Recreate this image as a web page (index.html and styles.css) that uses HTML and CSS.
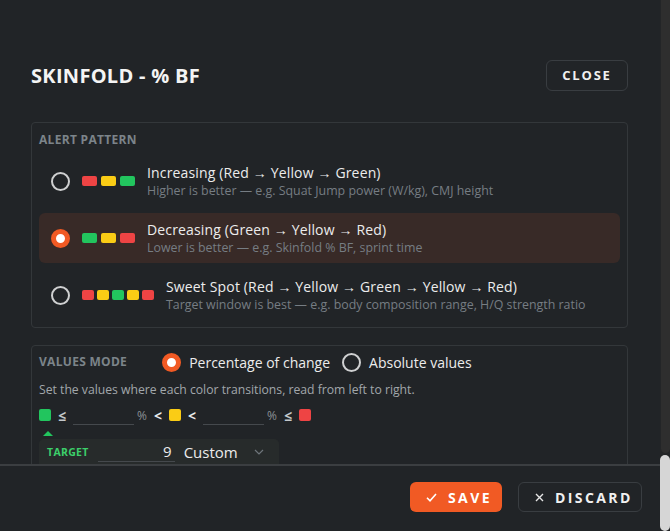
FILE: index.html
```html
<!DOCTYPE html>
<html lang="en">
<head>
    <meta charset="UTF-8">
    <meta name="viewport" content="width=device-width, initial-scale=1.0">
    <title>Skinfold - % BF</title>
    <link rel="stylesheet" href="styles.css">
</head>
<body>

    <div class="screen">
        <div class="modal">
            <div class="modal-body">

                <div class="modal-head">
                    <h1>SKINFOLD - % BF</h1>
                    <button class="btn-outline btn-close">CLOSE</button>
                </div>

                <section class="panel alert-panel">
                    <h2 class="panel-label">ALERT PATTERN</h2>

                    <div class="pattern">
                        <span class="radio"></span>
                        <span class="swatches">
                            <i class="sw red"></i><i class="sw yellow"></i><i class="sw green"></i>
                        </span>
                        <div class="pattern-text">
                            <div class="pattern-title">Increasing (Red → Yellow → Green)</div>
                            <div class="pattern-sub">Higher is better — e.g. Squat Jump power (W/kg), CMJ height</div>
                        </div>
                    </div>

                    <div class="pattern active">
                        <span class="radio checked"></span>
                        <span class="swatches">
                            <i class="sw green"></i><i class="sw yellow"></i><i class="sw red"></i>
                        </span>
                        <div class="pattern-text">
                            <div class="pattern-title">Decreasing (Green → Yellow → Red)</div>
                            <div class="pattern-sub">Lower is better — e.g. Skinfold % BF, sprint time</div>
                        </div>
                    </div>

                    <div class="pattern">
                        <span class="radio"></span>
                        <span class="swatches small">
                            <i class="sw red"></i><i class="sw yellow"></i><i class="sw green"></i><i class="sw yellow"></i><i class="sw red"></i>
                        </span>
                        <div class="pattern-text">
                            <div class="pattern-title">Sweet Spot (Red → Yellow → Green → Yellow → Red)</div>
                            <div class="pattern-sub">Target window is best — e.g. body composition range, H/Q strength ratio</div>
                        </div>
                    </div>
                </section>

                <section class="panel values-panel">
                    <div class="mode-row">
                        <h2 class="panel-label">VALUES MODE</h2>
                        <div class="mode-options">
                            <label class="mode-option"><span class="radio checked"></span>Percentage of change</label>
                            <label class="mode-option"><span class="radio"></span>Absolute values</label>
                        </div>
                    </div>

                    <p class="hint">Set the values where each color transitions, read from left to right.</p>

                    <div class="thresholds">
                        <i class="sq green"></i>
                        <span class="op">≤</span>
                        <input class="th-input" type="text">
                        <span class="unit">%</span>
                        <span class="op strong">&lt;</span>
                        <i class="sq yellow"></i>
                        <span class="op strong">&lt;</span>
                        <input class="th-input" type="text">
                        <span class="unit">%</span>
                        <span class="op">≤</span>
                        <i class="sq red"></i>
                    </div>

                    <div class="pointer"></div>

                    <div class="target">
                        <span class="target-label">TARGET</span>
                        <input class="target-input" type="text" value="9">
                        <span class="target-select">Custom
                            <svg class="chevron" width="10" height="6" viewBox="0 0 10 6">
                                <path d="M1 1l4 4 4-4" fill="none" stroke="#6e757b" stroke-width="1.2"/>
                            </svg>
                        </span>
                    </div>
                </section>

            </div>

            <div class="modal-foot">
                <button class="btn-save">
                    <svg width="11" height="9" viewBox="0 0 11 9">
                        <path d="M1 4.8l3 3L10 1" fill="none" stroke="#fff" stroke-width="1.6"/>
                    </svg>
                    SAVE
                </button>
                <button class="btn-outline btn-discard">
                    <svg width="9" height="9" viewBox="0 0 9 9">
                        <path d="M1 1l7 7M8 1l-7 7" stroke="#e6e6e6" stroke-width="1.4"/>
                    </svg>
                    DISCARD
                </button>
            </div>
        </div>

        <div class="scrollbar">
            <div class="scroll-track"></div>
            <div class="scroll-thumb"></div>
        </div>
    </div>

</body>
</html>
```

FILE: styles.css
```css
/* Reset */
* {
    margin: 0;
    padding: 0;
    box-sizing: border-box;
    font-family: "Open Sans", Arial, sans-serif;
}

body {
    background-color: #212427;
    color: #ececec;
}

.screen {
    display: flex;
    height: 531px;
    overflow: hidden;
}

.modal {
    width: 660px;
    display: flex;
    flex-direction: column;
}

.modal-body {
    height: 464px;
    overflow: hidden;
    padding: 60px 32px 0 31px;
}

/* Header */
.modal-head {
    display: flex;
    justify-content: space-between;
    align-items: center;
    height: 30px;
}

.modal-head h1 {
    font-size: 20px;
    font-weight: 700;
    color: #f4f4f4;
    letter-spacing: 0.3px;
}

button {
    font-family: inherit;
    cursor: pointer;
}

.btn-outline {
    background: transparent;
    border: 1px solid #393d41;
    border-radius: 6px;
    color: #f0f0f0;
    font-weight: 700;
}

.btn-close {
    width: 82px;
    height: 31px;
    font-size: 13px;
    letter-spacing: 1.8px;
}

/* Panels */
.panel {
    border: 1px solid #33373a;
    border-radius: 4px;
}

.panel-label {
    font-size: 12px;
    font-weight: 700;
    color: #7c848a;
    letter-spacing: 0.3px;
    line-height: 16px;
}

.alert-panel {
    margin-top: 32px;
    padding: 9px 7px 7px;
}

.alert-panel .panel-label {
    margin-bottom: 8px;
}

.pattern {
    display: flex;
    align-items: center;
    height: 50px;
    padding: 0 12px;
    border-radius: 6px;
    margin-bottom: 7px;
}

.pattern:last-child {
    margin-bottom: 0;
}

.pattern.active {
    background-color: #382a27;
}

.radio {
    flex: none;
    width: 19px;
    height: 19px;
    border: 2px solid #cfd0d1;
    border-radius: 50%;
}

.radio.checked {
    border: 5px solid #f15a24;
    background-color: #fff;
}

.swatches {
    display: flex;
    gap: 4px;
    margin: 0 12px;
}

.sw {
    display: block;
    width: 15px;
    height: 10px;
    border-radius: 2px;
}

.swatches.small {
    gap: 3px;
}

.swatches.small .sw {
    width: 12px;
}

.red { background-color: #ee4444; }
.yellow { background-color: #facc15; }
.green { background-color: #22c55e; }

.pattern-title {
    font-size: 14px;
    line-height: 18px;
    color: #ececec;
    letter-spacing: 0.15px;
}

.pattern-sub {
    font-size: 12.4px;
    line-height: 16px;
    color: #767d83;
    margin-top: 1px;
}

/* Values mode */
.values-panel {
    margin-top: 17px;
    padding: 6px 7px 0;
    height: 140px;
}

.mode-row {
    display: flex;
    align-items: center;
    height: 20px;
}

.mode-options {
    display: flex;
    gap: 12px;
    margin-left: 35px;
}

.mode-option {
    display: flex;
    align-items: center;
    gap: 8px;
    font-size: 14px;
    color: #ececec;
}

.hint {
    margin-top: 10px;
    font-size: 12.2px;
    line-height: 16px;
    color: #a2a7ab;
}

.thresholds {
    display: flex;
    align-items: center;
    height: 20px;
    margin-top: 7px;
}

.sq {
    display: block;
    width: 12px;
    height: 12px;
    border-radius: 2px;
}

.op {
    font-size: 14px;
    font-weight: 700;
    color: #c4c8cb;
    margin: 0 7px;
}

.op.strong {
    color: #ececec;
}

.unit {
    font-size: 12px;
    color: #8a9095;
    margin: 0 0 0 3px;
}

.th-input {
    width: 61px;
    height: 20px;
    background: transparent;
    border: none;
    border-bottom: 1px solid #45494d;
    color: #ececec;
    font-size: 14px;
}

.pointer {
    width: 0;
    height: 0;
    margin: 6px 0 3px 4px;
    border-left: 5px solid transparent;
    border-right: 5px solid transparent;
    border-bottom: 5px solid #22c55e;
}

.target {
    display: flex;
    align-items: center;
    width: 240px;
    height: 25px;
    padding: 0 8px;
    background-color: #272b2b;
    border-radius: 5px 5px 0 0;
}

.target-label {
    font-size: 10.5px;
    font-weight: 700;
    color: #3ccf6a;
    letter-spacing: 0.3px;
}

.target-input {
    width: 77px;
    height: 20px;
    margin-left: 9px;
    background: transparent;
    border: none;
    border-bottom: 1px solid #45494d;
    color: #ececec;
    font-size: 15px;
    text-align: right;
    padding-right: 3px;
}

.target-select {
    display: flex;
    align-items: center;
    margin-left: 9px;
    font-size: 15px;
    color: #ececec;
}

.chevron {
    margin-left: 16px;
}

/* Footer */
.modal-foot {
    flex: 1;
    border-top: 2px solid #3b3e41;
    display: flex;
    justify-content: flex-end;
    align-items: flex-start;
    gap: 16px;
    padding: 16px 18px 0 0;
}

.btn-save,
.btn-discard {
    display: flex;
    align-items: center;
    gap: 11px;
    height: 30px;
    font-size: 14px;
    font-weight: 700;
    letter-spacing: 2.4px;
}

.btn-save {
    width: 92px;
    padding-left: 16px;
    background-color: #f15a24;
    color: #fff;
    border: none;
    border-radius: 6px;
}

.btn-discard {
    width: 124px;
    padding-left: 16px;
}

/* Scrollbar column */
.scrollbar {
    width: 10px;
    display: flex;
    flex-direction: column;
    background-color: #232527;
}

.scroll-track {
    flex: 1;
    margin-left: 1px;
    background-color: #2e2e2e;
    border-radius: 0 0 5px 5px;
}

.scroll-thumb {
    height: 76px;
    margin-top: 2px;
    background-color: #d6d6d6;
    border-radius: 5px;
}
```
